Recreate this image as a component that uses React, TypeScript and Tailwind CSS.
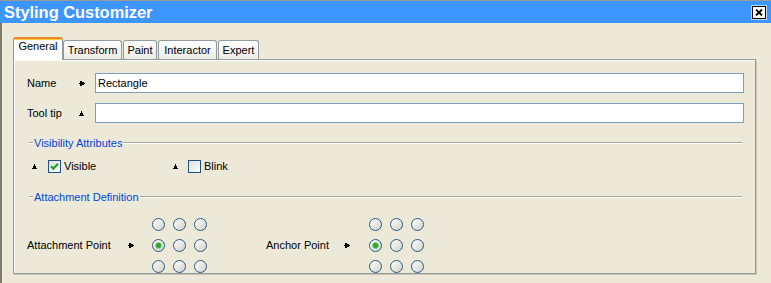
import React from "react";

const tabs = [
  { label: "General", width: "w-[50px]", active: true },
  { label: "Transform", width: "w-[59px]", active: false },
  { label: "Paint", width: "w-[34px]", active: false },
  { label: "Interactor", width: "w-[59px]", active: false },
  { label: "Expert", width: "w-[41px]", active: false },
];

function ArrowRight() {
  return (
    <svg width="6" height="5" viewBox="0 0 6 5" shapeRendering="crispEdges">
      <path d="M0 2h1v1H0z M1 0h2v1h2v1h1v1H5v1H3v1H1z" fill="#000" />
    </svg>
  );
}

function ArrowUp() {
  return (
    <svg width="5" height="5" viewBox="0 0 5 5" shapeRendering="crispEdges">
      <path d="M2 0h1v2h1v2h1v1H0V4h1V2h1z" fill="#000" />
    </svg>
  );
}

function Checkbox({ checked }: { checked?: boolean }) {
  return (
    <div className="w-[13px] h-[13px] border border-[#1c5180] bg-gradient-to-br from-[#dcdcd7] to-white flex items-center justify-center">
      {checked && (
        <svg width="11" height="11" viewBox="0 0 11 11">
          <path d="M2 5.2 L4.4 7.6 L9 2.8" stroke="#21a121" strokeWidth="2.2" fill="none" />
        </svg>
      )}
    </div>
  );
}

function Radio({ checked }: { checked?: boolean }) {
  return (
    <div className="w-[13px] h-[13px] rounded-full border border-[#2b5a85] bg-gradient-to-br from-white to-[#d2d0c6] flex items-center justify-center">
      {checked && <div className="w-[5px] h-[5px] rounded-full bg-[#2ea62e] shadow-[0_0_0_1px_#8fd58f]" />}
    </div>
  );
}

function RadioGrid({ selected }: { selected: number }) {
  return (
    <div className="grid grid-cols-3 gap-[8px] w-[55px]">
      {Array.from({ length: 9 }).map((_, i) => (
        <Radio key={i} checked={i === selected} />
      ))}
    </div>
  );
}

function Legend({ title }: { title: string }) {
  return (
    <div className="flex items-center h-[14px] pl-[15px] pr-[13px]">
      <div className="w-[4px] h-[2px] border-t border-[#a9a797] border-b border-b-white" />
      <span className="px-[1px] text-[#0046d5] leading-[14px]">{title}</span>
      <div className="flex-1 h-[2px] border-t border-[#a9a797] border-b border-b-white" />
    </div>
  );
}

export default function App() {
  return (
    <div className="w-[771px] h-[283px] overflow-hidden bg-[#ece9d8] font-['Liberation_Sans',Arial,sans-serif] text-[11px] text-black">
      {/* title bar */}
      <div className="h-[23px] border-t border-[#9a9a9a] bg-[#3d95ff] flex items-center justify-between pl-[4px] pr-[5px]">
        <span className="text-white font-bold text-[16.4px] leading-none">Styling Customizer</span>
        <div className="w-[14px] h-[13px] bg-white border border-black flex items-center justify-center shadow-[0_0_0_1px_#bcd8ff]">
          <svg width="8" height="7" viewBox="0 0 8 7">
            <path d="M1 0.5 L7 6.5 M7 0.5 L1 6.5" stroke="#000" strokeWidth="1.8" />
          </svg>
        </div>
      </div>

      {/* body */}
      <div className="h-[260px] border-l-2 border-[#7d7a6e] pt-[14px] pl-[11px]">
        {/* tabs */}
        <div className="flex items-end h-[22px]">
          {tabs.map((t, i) =>
            t.active ? (
              <div
                key={t.label}
                className={`${t.width} h-[23px] -mb-px relative z-10 bg-white border-x border-[#919b9c] border-t-2 border-t-[#e68b2c] rounded-t-[3px] shadow-[inset_0_1px_0_#ffc73c] text-center pt-[1px] leading-[13px]`}
              >
                {t.label}
              </div>
            ) : (
              <div
                key={t.label}
                className={`${t.width} ${i > 1 ? "ml-[1px]" : ""} h-[19px] border border-b-0 border-[#919b9c] rounded-t-[3px] bg-gradient-to-b from-white to-[#ecebe6] text-center leading-[18px]`}
              >
                {t.label}
              </div>
            )
          )}
        </div>

        {/* panel */}
        <div className="w-[743px] h-[215px] border border-[#919b9c] shadow-[inset_1px_1px_0_#fff,1px_1px_0_#c9c6b6] pt-[13px]">
          <div className="flex items-center h-[20px] pl-[13px] pr-[11px]">
            <span className="w-[52px]">Name</span>
            <div className="w-[16px] flex items-center">
              <ArrowRight />
            </div>
            <div className="flex-1 h-[20px] border border-[#7f9db9] bg-white pl-[2px] leading-[18px]">Rectangle</div>
          </div>

          <div className="flex items-center h-[20px] mt-[10px] pl-[13px] pr-[11px]">
            <span className="w-[52px]">Tool tip</span>
            <div className="w-[16px] flex items-center">
              <ArrowUp />
            </div>
            <div className="flex-1 h-[20px] border border-[#7f9db9] bg-white" />
          </div>

          <div className="mt-[13px]">
            <Legend title="Visibility Attributes" />
          </div>

          <div className="flex items-center h-[13px] mt-[10px] pl-[18px]">
            <div className="w-[141px] flex items-center">
              <ArrowUp />
              <div className="ml-[11px]">
                <Checkbox checked />
              </div>
              <span className="ml-[3px]">Visible</span>
            </div>
            <div className="flex items-center">
              <ArrowUp />
              <div className="ml-[10px]">
                <Checkbox />
              </div>
              <span className="ml-[3px]">Blink</span>
            </div>
          </div>

          <div className="mt-[17px]">
            <Legend title="Attachment Definition" />
          </div>

          <div className="flex items-center mt-[14px] pl-[13px]">
            <span className="w-[101px]">Attachment Point</span>
            <div className="w-[24px] flex items-center">
              <ArrowRight />
            </div>
            <RadioGrid selected={3} />
            <span className="ml-[59px] w-[78px]">Anchor Point</span>
            <div className="w-[25px] flex items-center">
              <ArrowRight />
            </div>
            <RadioGrid selected={3} />
          </div>
        </div>
      </div>
    </div>
  );
}
